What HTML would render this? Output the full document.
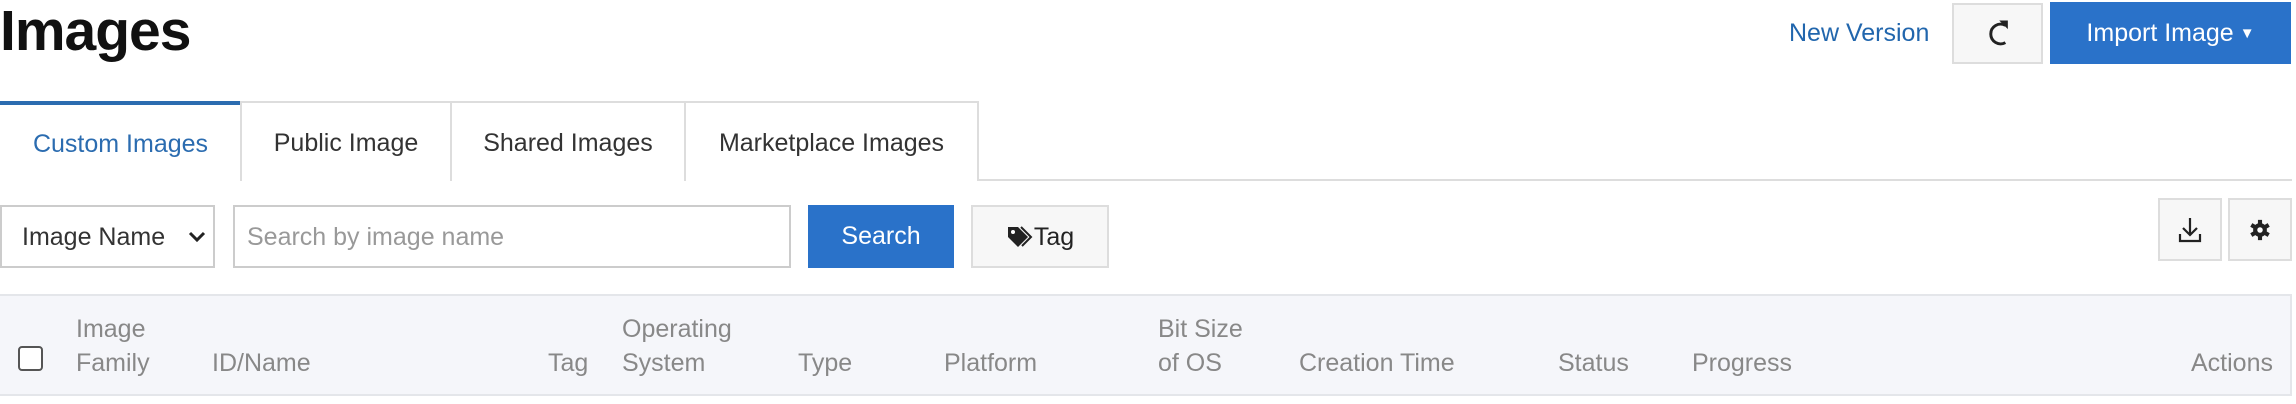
<!DOCTYPE html>
<html><head><meta charset="utf-8"><style>
*{box-sizing:border-box;margin:0;padding:0}
body{width:2296px;height:404px;background:#fff;font-family:"Liberation Sans",Arial,sans-serif;position:relative;overflow:hidden;color:#333}
.a{position:absolute}
h1{position:absolute;left:0;top:0px;font-size:57px;font-weight:700;color:#111;letter-spacing:-1px;line-height:62px}
.btn{position:absolute;border:2px solid #ddd;background:#f7f7f7;display:flex;align-items:center;justify-content:center}
.tab{position:absolute;top:101px;height:80px;border:2px solid #ddd;border-bottom:none;display:flex;align-items:center;justify-content:center;font-size:25px;color:#333;background:#fff}
.th{position:absolute;font-size:25px;color:#888;line-height:34px}
</style></head><body>
<h1>Images</h1>
<div class="a" style="left:1789px;top:16px;font-size:25px;color:#2166ad;line-height:34px">New Version</div>
<div class="btn" style="left:1952px;top:3px;width:91px;height:61px">
<svg width="30" height="32" viewBox="0 0 24 26"><path d="M18 6A8 8 0 1 0 18 20" fill="none" stroke="#222" stroke-width="2.4"/><path d="M13 2L20 2L20 9Z" fill="#222"/></svg></div>
<div class="a" style="left:2050px;top:2px;width:241px;height:62px;background:#2a72c9;color:#fff;font-size:25px;display:flex;align-items:center;justify-content:center">Import Image <span style="font-size:15px;margin-left:6px">▼</span></div>
<div class="a" style="left:0;top:179px;width:2292px;height:2px;background:#ddd"></div>
<div class="tab" style="left:0;width:241px;border:none;border-top:4px solid #2b6cb0;color:#2b6cb0;padding-top:2px">Custom Images</div>
<div class="tab" style="left:240px;width:212px;padding-top:2px">Public Image</div>
<div class="tab" style="left:450px;width:236px;padding-top:2px">Shared Images</div>
<div class="tab" style="left:684px;width:295px;padding-top:2px">Marketplace Images</div>
<div class="a" style="left:0;top:205px;width:215px;height:63px;border:2px solid #ccc;font-size:25px;color:#333;padding-left:20px;padding-top:2px;display:flex;align-items:center">Image Name
<svg class="a" style="left:186px;top:24px" width="18" height="12" viewBox="0 0 18 12"><path d="M2 2L9 9L16 2" fill="none" stroke="#222" stroke-width="3"/></svg></div>
<div class="a" style="left:233px;top:205px;width:558px;height:63px;border:2px solid #ccc;font-size:25px;color:#999;padding-left:12px;padding-top:2px;display:flex;align-items:center">Search by image name</div>
<div class="a" style="left:808px;top:205px;width:146px;height:63px;background:#2a72c9;color:#fff;font-size:25px;display:flex;align-items:center;justify-content:center">Search</div>
<div class="btn" style="left:971px;top:205px;width:138px;height:63px;font-size:25px;color:#222;padding-top:2px">
<svg width="28" height="26" viewBox="0 0 28 26"><path d="M2 2H12L22 12L12 22L2 12Z" fill="#222"/><circle cx="7" cy="7" r="2" fill="#fff"/><path d="M15 2L25 12L16 21" fill="none" stroke="#222" stroke-width="2"/></svg>Tag</div>
<div class="btn" style="left:2158px;top:198px;width:64px;height:63px">
<svg width="26" height="28" viewBox="0 0 26 28"><path d="M13 2V19M6 12L13 19L20 12" fill="none" stroke="#222" stroke-width="2.2"/><path d="M3 18V25H23V18" fill="none" stroke="#222" stroke-width="2.2"/></svg></div>
<div class="btn" style="left:2228px;top:198px;width:64px;height:63px">
<svg width="22" height="24" viewBox="0 0 24 24"><circle cx="12" cy="12" r="7.5" fill="#222"/><g stroke="#222" stroke-width="4.5"><path d="M12 1V23M2.5 6.5L21.5 17.5M2.5 17.5L21.5 6.5"/></g><circle cx="12" cy="12" r="3" fill="#fff"/></svg></div>
<div class="a" style="left:0;top:294px;width:2292px;height:102px;background:#f5f6fa;border-top:2px solid #e4e6ea;border-bottom:2px solid #e4e6ea;border-right:2px solid #e4e6ea"></div>
<div class="a" style="left:18px;top:346px;width:25px;height:25px;border:2px solid #555;border-radius:4px;background:#fff"></div>
<div class="th" style="left:76px;top:312px">Image<br>Family</div>
<div class="th" style="left:212px;top:346px">ID/Name</div>
<div class="th" style="left:548px;top:346px">Tag</div>
<div class="th" style="left:622px;top:312px">Operating<br>System</div>
<div class="th" style="left:798px;top:346px">Type</div>
<div class="th" style="left:944px;top:346px">Platform</div>
<div class="th" style="left:1158px;top:312px">Bit Size<br>of OS</div>
<div class="th" style="left:1299px;top:346px">Creation Time</div>
<div class="th" style="left:1558px;top:346px">Status</div>
<div class="th" style="left:1692px;top:346px">Progress</div>
<div class="th" style="left:2191px;top:346px">Actions</div>
</body></html>
